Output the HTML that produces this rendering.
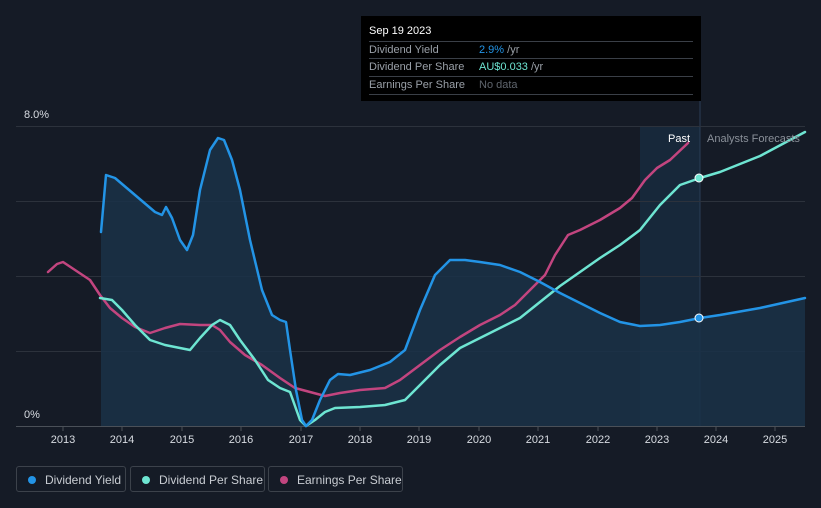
<!DOCTYPE html>
<html><head><meta charset="utf-8"><style>
html,body{margin:0;background:#151b26;width:821px;height:508px;overflow:hidden;font-family:"Liberation Sans",sans-serif;}
svg{position:absolute;left:0;top:0}
.tip{position:absolute;left:361px;top:16px;width:340px;height:85px;background:#000;color:#fff;font-size:11px}
.tip .h{position:absolute;left:8px;top:9px;font-size:11px}
.row{position:absolute;left:8px;width:324px;height:17px;border-top:1px solid #3a3f47;color:#9aa0a8;line-height:17px;white-space:nowrap}
.row span{position:absolute;left:110px}
.leg{position:absolute;top:466px;height:26px;border:1px solid #3c424b;border-radius:3px;color:#c8ccd2;font-size:12px;line-height:26px;box-sizing:border-box;white-space:nowrap;overflow:hidden}
.leg i{position:absolute;left:11px;top:9px;width:8px;height:8px;border-radius:50%}
.leg b{font-weight:normal;position:absolute;left:28px}
</style></head><body>
<svg width="821" height="508">
<rect x="640" y="126" width="60" height="300" fill="#17283a"/>
<line x1="700" y1="101" x2="700" y2="426" stroke="#2a3e55"/>
<g stroke="#2c323c" stroke-width="1">
<line x1="16" y1="126.5" x2="805" y2="126.5"/><line x1="16" y1="201.5" x2="805" y2="201.5"/><line x1="16" y1="276.5" x2="805" y2="276.5"/><line x1="16" y1="351.5" x2="805" y2="351.5"/>
</g>
<polygon fill="#1a3148" fill-opacity="0.85" points="101,426 101,232 106,175 115,178 135,195 155,212 162,215 166,207 172,218 180,240 187,250 193,235 200,190 210,150 218,138 224,140 232,160 240,190 250,240 262,290 272,315 280,320 286,322 290,350 296,390 302,420 306,426 312,420 320,400 330,380 338,374 350,375 370,370 390,362 405,350 420,310 435,275 450,260 465,260 480,262 500,265 520,272 540,282 560,293 580,303 600,313 620,322 640,326 660,325 680,322 700,318 720,315 760,308 805,298 805,426"/>
<line x1="16" y1="426.5" x2="805" y2="426.5" stroke="#4a5058"/>
<g stroke="#4a5058"><line x1="63" y1="426" x2="63" y2="431"/><line x1="122" y1="426" x2="122" y2="431"/><line x1="182" y1="426" x2="182" y2="431"/><line x1="241" y1="426" x2="241" y2="431"/><line x1="301" y1="426" x2="301" y2="431"/><line x1="360" y1="426" x2="360" y2="431"/><line x1="419" y1="426" x2="419" y2="431"/><line x1="479" y1="426" x2="479" y2="431"/><line x1="538" y1="426" x2="538" y2="431"/><line x1="598" y1="426" x2="598" y2="431"/><line x1="657" y1="426" x2="657" y2="431"/><line x1="716" y1="426" x2="716" y2="431"/><line x1="775" y1="426" x2="775" y2="431"/></g>
<g fill="none" stroke-width="2.5" stroke-linejoin="round" stroke-linecap="round">
<polyline stroke="#c2457f" points="48,272 57,264 63,262 72,268 90,280 100,295 110,308 122,318 135,327 150,333 165,328 180,324 200,325 212,325 220,330 230,342 245,355 262,365 280,378 295,388 310,392 325,396 340,393 360,390 385,388 400,380 420,365 440,350 460,337 480,325 500,315 515,305 530,290 545,275 555,255 568,235 580,230 600,220 620,208 632,198 645,180 657,168 670,160 688,143"/>
<polyline stroke="#6ee5d2" points="100,298 112,300 122,310 135,325 150,340 165,345 180,348 190,350 200,338 212,325 220,320 230,325 240,340 255,360 268,380 280,388 290,392 300,420 306,426 315,420 325,412 335,408 360,407 385,405 405,400 420,385 440,365 460,348 480,338 500,328 520,318 540,302 560,286 580,272 600,258 620,245 640,230 660,205 680,185 700,178 720,172 760,156 805,132"/>
<polyline stroke="#2394e6" points="101,232 106,175 115,178 135,195 155,212 162,215 166,207 172,218 180,240 187,250 193,235 200,190 210,150 218,138 224,140 232,160 240,190 250,240 262,290 272,315 280,320 286,322 290,350 296,390 302,420 306,426 312,420 320,400 330,380 338,374 350,375 370,370 390,362 405,350 420,310 435,275 450,260 465,260 480,262 500,265 520,272 540,282 560,293 580,303 600,313 620,322 640,326 660,325 680,322 700,318 720,315 760,308 805,298"/>
</g>
<circle cx="699" cy="178" r="4" fill="#6ee5d2" stroke="#fff" stroke-width="1"/>
<circle cx="699" cy="318" r="4" fill="#2394e6" stroke="#fff" stroke-width="1"/>
<g font-size="11" fill="#d8dce2" font-family="Liberation Sans">
<text x="24" y="118">8.0%</text><text x="24" y="418">0%</text>
<g text-anchor="middle"><text x="63" y="443">2013</text><text x="122" y="443">2014</text><text x="182" y="443">2015</text><text x="241" y="443">2016</text><text x="301" y="443">2017</text><text x="360" y="443">2018</text><text x="419" y="443">2019</text><text x="479" y="443">2020</text><text x="538" y="443">2021</text><text x="598" y="443">2022</text><text x="657" y="443">2023</text><text x="716" y="443">2024</text><text x="775" y="443">2025</text></g>
<text x="690" y="142" text-anchor="end" fill="#fff">Past</text>
<text x="707" y="142" fill="#8a9099">Analysts Forecasts</text>
</g>
</svg>
<div class="tip"><div class="h">Sep 19 2023</div>
<div class="row" style="top:25px">Dividend Yield<span><em style="font-style:normal;color:#2394e6">2.9%</em> /yr</span></div>
<div class="row" style="top:42px">Dividend Per Share<span><em style="font-style:normal;color:#6ee5d2">AU$0.033</em> /yr</span></div>
<div class="row" style="top:60px;border-bottom:1px solid #3a3f47">Earnings Per Share<span style="color:#5f656d">No data</span></div>
</div>
<div class="leg" style="left:16px;width:110px"><i style="background:#2394e6"></i><b>Dividend Yield</b></div>
<div class="leg" style="left:130px;width:135px"><i style="background:#6ee5d2"></i><b>Dividend Per Share</b></div>
<div class="leg" style="left:268px;width:135px"><i style="background:#c2457f"></i><b>Earnings Per Share</b></div>
</body></html>
